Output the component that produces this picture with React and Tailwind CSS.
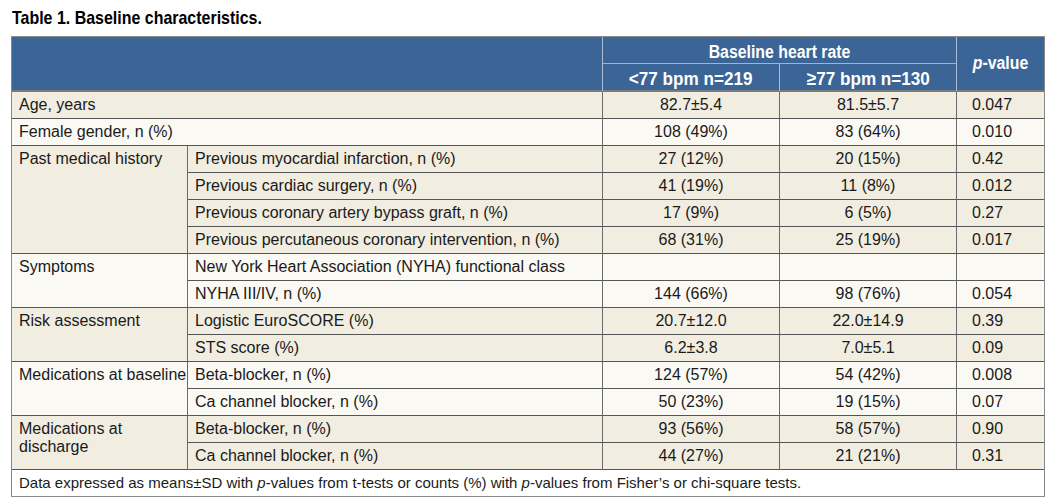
import React from "react";

const body = { fontFamily: '"Liberation Sans", Arial, sans-serif' };

const beige = "bg-[#f1ede0]";
const light = "bg-[#fbf9f4]";

const groups = [
  { label: "Age, years", bg: beige, single: true, rows: [["82.7±5.4", "81.5±5.7", "0.047"]] },
  { label: "Female gender, n (%)", bg: light, single: true, rows: [["108 (49%)", "83 (64%)", "0.010"]] },
  {
    label: "Past medical history",
    bg: beige,
    rows: [
      ["Previous myocardial infarction, n (%)", "27 (12%)", "20 (15%)", "0.42"],
      ["Previous cardiac surgery, n (%)", "41 (19%)", "11 (8%)", "0.012"],
      ["Previous coronary artery bypass graft, n (%)", "17 (9%)", "6 (5%)", "0.27"],
      ["Previous percutaneous coronary intervention, n (%)", "68 (31%)", "25 (19%)", "0.017"],
    ],
  },
  {
    label: "Symptoms",
    bg: light,
    rows: [
      ["New York Heart Association (NYHA) functional class", "", "", ""],
      ["NYHA III/IV, n (%)", "144 (66%)", "98 (76%)", "0.054"],
    ],
  },
  {
    label: "Risk assessment",
    bg: beige,
    rows: [
      ["Logistic EuroSCORE (%)", "20.7±12.0", "22.0±14.9", "0.39"],
      ["STS score (%)", "6.2±3.8", "7.0±5.1", "0.09"],
    ],
  },
  {
    label: "Medications at baseline",
    bg: light,
    rows: [
      ["Beta-blocker, n (%)", "124 (57%)", "54 (42%)", "0.008"],
      ["Ca channel blocker, n (%)", "50 (23%)", "19 (15%)", "0.07"],
    ],
  },
  {
    label: "Medications at discharge",
    bg: beige,
    rows: [
      ["Beta-blocker, n (%)", "93 (56%)", "58 (57%)", "0.90"],
      ["Ca channel blocker, n (%)", "44 (27%)", "21 (21%)", "0.31"],
    ],
  },
];

const cellB = "border-b border-b-[#555]";
const cellR = "border-r border-r-[#6a6a6a]";

export default function App() {
  return (
    <div className="bg-white w-[1059px] h-[503px] pt-[6px] pl-[11px] text-[#1a1a1a]" style={body}>
      <div className="pl-[1px] text-[19px] leading-[24px] font-bold text-black">
        <span className="inline-block origin-left scale-x-[0.84]">Table 1. Baseline characteristics.</span>
      </div>
      <table className="mt-[6px] w-[1034px] table-fixed border-separate border-spacing-0 border border-[#8a8a8a] text-[16px]">
        <colgroup>
          <col className="w-[176px]" />
          <col className="w-[415px]" />
          <col className="w-[177px]" />
          <col className="w-[177px]" />
          <col className="w-[87px]" />
        </colgroup>
        <thead className="bg-[#3b6596] text-white font-bold">
          <tr className="h-[27px]">
            <th colSpan={2} rowSpan={2} className="border-r border-r-[#a9bdd6] border-b-2 border-b-[#7a7a7a]"></th>
            <th colSpan={2} className="pt-[3px] text-[18px] leading-[20px] text-center border-r border-r-[#a9bdd6] border-b border-b-[#9fb5d1]">
              <span className="inline-block scale-x-[0.88]">Baseline heart rate</span>
            </th>
            <th rowSpan={2} className="text-[18px] text-center border-b-2 border-b-[#7a7a7a]">
              <span className="inline-block scale-x-[0.88]">
                <i>p</i>-value
              </span>
            </th>
          </tr>
          <tr className="h-[28px]">
            <th className="pt-[3px] text-[19px] leading-[20px] text-center border-r border-r-[#a9bdd6] border-b-2 border-b-[#7a7a7a]">
              <span className="inline-block scale-x-[0.9]">&lt;77 bpm n=219</span>
            </th>
            <th className="pt-[3px] text-[19px] leading-[20px] text-center border-r border-r-[#a9bdd6] border-b-2 border-b-[#7a7a7a]">
              <span className="inline-block scale-x-[0.9]">≥77 bpm n=130</span>
            </th>
          </tr>
        </thead>
        <tbody className="leading-[18px]">
          {groups.map((g, gi) =>
            g.single ? (
              <tr key={gi} className={`h-[27px] ${g.bg}`}>
                <td colSpan={2} className={`pl-[7px] ${cellR} ${cellB}`}>{g.label}</td>
                <td className={`text-center ${cellR} ${cellB}`}>{g.rows[0][0]}</td>
                <td className={`text-center ${cellR} ${cellB}`}>{g.rows[0][1]}</td>
                <td className={`pl-[15px] ${cellB}`}>{g.rows[0][2]}</td>
              </tr>
            ) : (
              g.rows.map((r, ri) => (
                <tr key={`${gi}-${ri}`} className={`h-[27px] ${g.bg}`}>
                  {ri === 0 && (
                    <td rowSpan={g.rows.length} className={`align-top pl-[7px] pr-0 pt-[4px] ${cellR} ${cellB}`}>
                      {g.label}
                    </td>
                  )}
                  <td className={`pl-[7px] whitespace-nowrap ${cellR} ${cellB}`}>{r[0]}</td>
                  <td className={`text-center ${cellR} ${cellB}`}>{r[1]}</td>
                  <td className={`text-center ${cellR} ${cellB}`}>{r[2]}</td>
                  <td className={`pl-[15px] ${cellB}`}>{r[3]}</td>
                </tr>
              ))
            )
          )}
          <tr className="h-[26px] bg-white">
            <td colSpan={5} className="pl-[7px] text-[15px]">
              Data expressed as means±SD with <i>p</i>-values from t-tests or counts (%) with <i>p</i>-values from Fisher’s or chi-square tests.
            </td>
          </tr>
        </tbody>
      </table>
    </div>
  );
}
